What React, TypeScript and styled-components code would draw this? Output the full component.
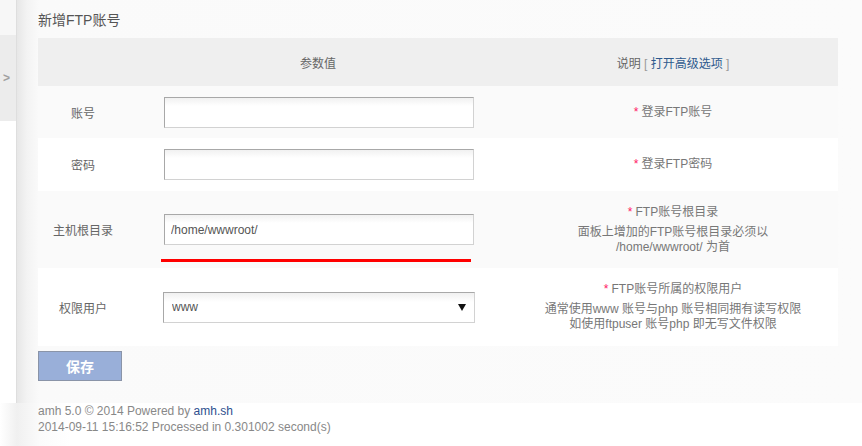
import React from "react";
import styled, { createGlobalStyle } from "styled-components";

const Global = createGlobalStyle`
  html, body { margin: 0; padding: 0; background: #ffffff; }
  body {
    font-family: "Liberation Sans", Arial, "Noto Sans CJK SC", sans-serif;
    font-size: 12px;
    color: #666;
  }
  * { box-sizing: border-box; }
`;

const Page = styled.div`
  width: 862px;
  height: 446px;
  overflow: hidden;
  display: flex;
  flex-direction: column;
`;

const Body = styled.div`
  display: flex;
  height: 403px;
`;

const Sidebar = styled.aside`
  width: 17px;
  flex: none;
  display: flex;
  flex-direction: column;
  background: #ffffff;
  border-right: 1px solid #dedede;
`;

const SideTop = styled.div`
  height: 35px;
  background: #f7f7f7;
`;

const SideTab = styled.div`
  height: 86px;
  background: #ececec;
  display: flex;
  align-items: center;
  padding-left: 3px;
  color: #a0a0a0;
  font-size: 12px;
  font-weight: bold;
`;

const Main = styled.main`
  flex: 1;
  padding: 11px 24px 0 21px;
  background: linear-gradient(to right, #e7e7e7 0, #f3f3f3 10px, #fafafa 22px, #fbfbfb 100%);
`;

const Title = styled.h2`
  margin: 0 0 9px 0;
  font-size: 14px;
  line-height: 18px;
  font-weight: normal;
  color: #555;
`;

const Table = styled.div`
  width: 800px;
  display: flex;
  flex-direction: column;
`;

const Row = styled.div<{ $h: number; $bg: string }>`
  display: grid;
  grid-template-columns: 90px 380px 330px;
  align-items: center;
  height: ${(p) => p.$h}px;
  background: ${(p) => p.$bg};
`;

const Label = styled.div`
  text-align: center;
  color: #666;
`;

const HeadCell = styled.div`
  text-align: center;
  color: #666;
`;

const Bracket = styled.span`
  color: #999;
`;

const Link = styled.a`
  color: #2e5a8e;
  text-decoration: none;
`;

const Field = styled.div<{ $dx?: number }>`
  position: relative;
  display: flex;
  justify-content: center;
  padding-left: ${(p) => p.$dx ?? 0}px;
`;

const TextInput = styled.input`
  width: 310px;
  height: 31px;
  border: 1px solid #d2d2d2;
  border-top-color: #a8a8a8;
  border-left-color: #a8a8a8;
  background: linear-gradient(to bottom, #f1f1f1 0, #ffffff 8px, #ffffff 100%);
  padding: 0 6px;
  font-family: "Liberation Sans", Arial, sans-serif;
  font-size: 12px;
  color: #555;
  outline: none;
`;

const Annotation = styled.div`
  position: absolute;
  left: 33px;
  top: calc(100% + 14px);
  width: 310px;
  height: 3px;
  background: #ff0000;
`;

const SelectWrap = styled.div`
  position: relative;
  width: 312px;
  &::after {
    content: "";
    position: absolute;
    right: 9px;
    top: 12px;
    border-left: 4px solid transparent;
    border-right: 4px solid transparent;
    border-top: 7px solid #111;
  }
`;

const Select = styled.select`
  appearance: none;
  -webkit-appearance: none;
  width: 312px;
  height: 31px;
  border: 1px solid #d2d2d2;
  border-top-color: #a8a8a8;
  border-left-color: #a8a8a8;
  background: linear-gradient(to bottom, #f0f0f0 0, #ffffff 9px, #ffffff 100%);
  padding: 0 8px;
  font-family: "Liberation Sans", Arial, sans-serif;
  font-size: 12px;
  color: #555;
  outline: none;
`;

const Desc = styled.div`
  text-align: center;
  color: #777;
  line-height: 15px;
`;

const DescHead = styled.div<{ $gap?: number }>`
  margin-bottom: ${(p) => p.$gap ?? 0}px;
`;

const Star = styled.span`
  color: #ff1a66;
  margin-right: 3px;
`;

const SaveButton = styled.button`
  margin-top: 5px;
  width: 84px;
  height: 30px;
  border: 1px solid #8a94a8;
  background: #99afd9;
  color: #ffffff;
  font-family: "Liberation Sans", Arial, "Noto Sans CJK SC", sans-serif;
  font-size: 14px;
  font-weight: bold;
  cursor: pointer;
`;

const Footer = styled.footer`
  flex: 1;
  padding-left: 38px;
  background: linear-gradient(to right, #ffffff 0, #f0f0f0 17px, #fbfbfb 40px, #ffffff 70px);
  color: #888;
  font-size: 12px;
  line-height: 16px;
`;

const FootLink = styled.a`
  color: #2e4f8e;
  text-decoration: none;
`;

export default function App() {
  return (
    <Page>
      <Global />
      <Body>
        <Sidebar>
          <SideTop />
          <SideTab>&gt;</SideTab>
        </Sidebar>
        <Main>
          <Title>新增FTP账号</Title>
          <Table>
            <Row $h={48} $bg="#efefef">
              <HeadCell />
              <HeadCell>参数值</HeadCell>
              <HeadCell>
                说明 <Bracket>[</Bracket> <Link href="#">打开高级选项</Link> <Bracket>]</Bracket>
              </HeadCell>
            </Row>
            <Row $h={52} $bg="#fafafa">
              <Label>账号</Label>
              <Field $dx={2}>
                <TextInput type="text" defaultValue="" />
              </Field>
              <Desc>
                <Star>*</Star>登录FTP账号
              </Desc>
            </Row>
            <Row $h={53} $bg="#ffffff">
              <Label>密码</Label>
              <Field $dx={2}>
                <TextInput type="password" defaultValue="" />
              </Field>
              <Desc>
                <Star>*</Star>登录FTP密码
              </Desc>
            </Row>
            <Row $h={77} $bg="#fafafa">
              <Label>主机根目录</Label>
              <Field $dx={2}>
                <TextInput type="text" defaultValue="/home/wwwroot/" />
                <Annotation />
              </Field>
              <Desc>
                <DescHead $gap={5}>
                  <Star>*</Star>FTP账号根目录
                </DescHead>
                面板上增加的FTP账号根目录必须以
                <br />
                /home/wwwroot/ 为首
              </Desc>
            </Row>
            <Row $h={78} $bg="#ffffff">
              <Label>权限用户</Label>
              <Field $dx={2}>
                <SelectWrap>
                  <Select defaultValue="www">
                    <option value="www">www</option>
                    <option value="ftpuser">ftpuser</option>
                  </Select>
                </SelectWrap>
              </Field>
              <Desc>
                <DescHead $gap={5}>
                  <Star>*</Star>FTP账号所属的权限用户
                </DescHead>
                通常使用www 账号与php 账号相同拥有读写权限
                <br />
                如使用ftpuser 账号php 即无写文件权限
              </Desc>
            </Row>
          </Table>
          <SaveButton type="button">保存</SaveButton>
        </Main>
      </Body>
      <Footer>
        <div>
          amh 5.0 © 2014 Powered by <FootLink href="#">amh.sh</FootLink>
        </div>
        <div>2014-09-11 15:16:52 Processed in 0.301002 second(s)</div>
      </Footer>
    </Page>
  );
}
